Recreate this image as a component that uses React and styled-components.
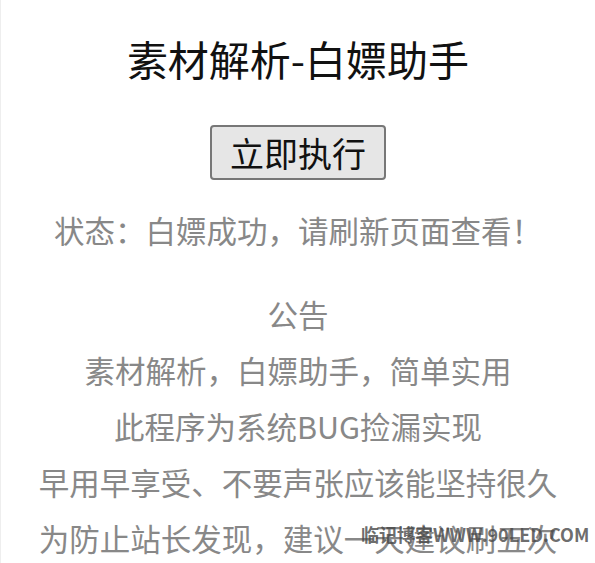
import styled, { createGlobalStyle } from "styled-components"

const GlobalStyle = createGlobalStyle`
    html, body {
        margin: 0;
        padding: 0;
        background: #fff;
    }
    body {
        font-family: "Microsoft YaHei", "Noto Sans CJK SC", "Noto Sans", sans-serif;
    }
`
const Page = styled.div`
    position: relative;
    width: 595px;
    height: 563px;
    overflow: hidden;
    box-sizing: border-box;
    border-left: 1px solid #eeeeee;
    padding-top: 30px;
    display: flex;
    flex-direction: column;
    align-items: center;
    text-align: center;
`
const Title = styled.h1`
    margin: 0;
    font-size: 41px;
    line-height: 56px;
    font-weight: 400;
    color: #111;
`
const RunButton = styled.button`
    margin-top: 39px;
    width: 176px;
    height: 57px;
    box-sizing: border-box;
    border: 2px solid #777;
    border-radius: 4px;
    background: #e6e6e6;
    font-family: inherit;
    font-size: 34px;
    color: #111;
    cursor: pointer;
`
const Status = styled.p`
    margin: 30px 0 0;
    font-size: 30.5px;
    line-height: 40px;
    color: #888;
`
const Notice = styled.div`
    margin-top: 36px;
    display: flex;
    flex-direction: column;
    align-items: center;
`
const Line = styled.p`
    margin: 0;
    font-size: 30.5px;
    line-height: 56px;
    color: #888;
    white-space: nowrap;
`
const Watermark = styled.div`
    position: absolute;
    left: 360px;
    top: 522px;
    font-size: 18px;
    font-weight: 700;
    color: rgba(70, 70, 70, 0.8);
    white-space: nowrap;
    font-family: "Noto Sans CJK SC", "Liberation Sans", sans-serif;
    line-height: 24px;
`

const notice = [
    "公告",
    "素材解析，白嫖助手，简单实用",
    "此程序为系统BUG捡漏实现",
    "早用早享受、不要声张应该能坚持很久",
    "为防止站长发现，建议一天建议刷五次",
]

const App = () => {
  return (
    <>
      <GlobalStyle />
      <Page>
        <Title>素材解析-白嫖助手</Title>
        <RunButton>立即执行</RunButton>
        <Status>状态：白嫖成功，请刷新页面查看！</Status>
        <Notice>
          {notice.map((text) => (
            <Line key={text}>{text}</Line>
          ))}
        </Notice>
        <Watermark>临记博客WWW.90LED.COM</Watermark>
      </Page>
    </>
  )
}

export default App
